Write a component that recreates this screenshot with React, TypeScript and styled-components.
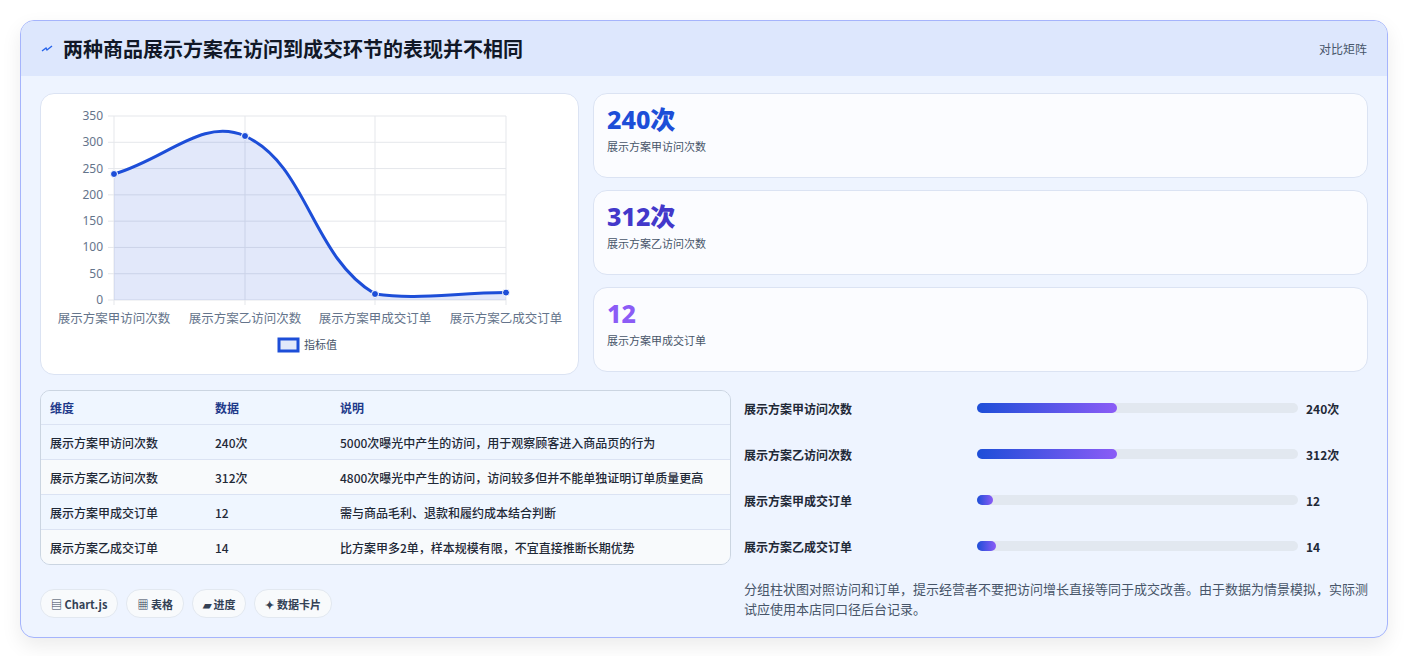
import React from "react";
import styled, { createGlobalStyle } from "styled-components";

const G = createGlobalStyle`
  body { margin: 0; background: #fff; font-family: "Noto Sans CJK SC", "Noto Sans", sans-serif; }
`;
const Page = styled.div`padding: 20px 20px 22px 20px;`;
const Card = styled.div`
  border: 1px solid #a5b4fc; border-radius: 14px; background: #eef4ff; overflow: hidden;
  box-shadow: 0 8px 20px rgba(0,0,0,0.08);
`;
const Header = styled.div`
  height: 55px; display: flex; align-items: center; justify-content: space-between;
  padding: 0 20px 0 20px; background: #dde7fd;
`;
const Title = styled.div`display: flex; align-items: center; gap: 10px; font-size: 20px; font-weight: 700; color: #111827;`;
const Tag = styled.div`font-size: 12px; color: #475569;`;
const Body = styled.div`padding: 17px 19px 18px 19px; display: flex; flex-direction: column; gap: 15px;`;
const TopRow = styled.div`display: grid; grid-template-columns: 539px 1fr; column-gap: 14px;`;
const BottomRow = styled.div`display: grid; grid-template-columns: 691px 1fr; column-gap: 13px;`;
const White = styled.div`background: #fff; border: 1px solid #dbe3f3; border-radius: 14px;`;
const ChartBox = styled(White)`height: 280px; position: relative;`;
const Stats = styled.div`display: flex; flex-direction: column; gap: 12px;`;
const Stat = styled(White)`height: 85px; background: #fbfcff; padding: 11px 13px; box-sizing: border-box;`;
const StatV = styled.div<{ c: string }>`font-size: 25px; font-weight: 800; color: ${p => p.c}; line-height: 28px; font-family: "Noto Sans", "Noto Sans CJK SC", sans-serif;`;
const StatL = styled.div`font-size: 11px; color: #475569; margin-top: 5px;`;
const Left = styled.div`display: flex; flex-direction: column; gap: 24px;`;
const Table = styled.div`border: 1px solid #cbd5e1; border-radius: 10px; overflow: hidden;`;
const Row = styled.div<{ bg: string; head?: boolean }>`
  display: grid; grid-template-columns: 165px 125px 1fr; height: ${p => p.head ? 33 : 34}px; align-items: center;
  padding-left: 9px; font-size: 12px; background: ${p => p.bg};
  color: ${p => p.head ? "#1e3a8a" : "#1f2937"}; font-weight: ${p => p.head ? 700 : 500};
  border-top: ${p => p.head ? "none" : "1px solid #dbe3f3"};
`;
const Chips = styled.div`display: flex; gap: 8px;`;
const Chip = styled.div`height: 27px; padding: 0 10px; border-radius: 14px; background: #f8fafc; border: 1px solid #e2e8f0;
  display: flex; align-items: center; gap: 4px; font-size: 11px; font-weight: 700; color: #334155;`;
const Right = styled.div`display: flex; flex-direction: column;`;
const Bars = styled.div`display: flex; flex-direction: column; gap: 28px; padding-top: 9px;`;
const BarRow = styled.div`display: grid; grid-template-columns: 225px 321px 1fr; align-items: center; column-gap: 8px; height: 18px;`;
const BarL = styled.div`font-size: 12px; font-weight: 600; color: #1f2937;`;
const Track = styled.div`height: 10px; border-radius: 5px; background: #e2e8f0;`;
const Fill = styled.div`height: 100%; border-radius: 5px; background: linear-gradient(90deg, #1d4ed8, #8b5cf6);`;
const BarV = styled.div`font-size: 12px; font-weight: 700; color: #1f2937;`;
const Note = styled.div`margin-top: 24px; font-size: 13px; line-height: 20px; color: #475569;`;

const rows = [
  ["展示方案甲访问次数", "240次", "5000次曝光中产生的访问，用于观察顾客进入商品页的行为"],
  ["展示方案乙访问次数", "312次", "4800次曝光中产生的访问，访问较多但并不能单独证明订单质量更高"],
  ["展示方案甲成交订单", "12", "需与商品毛利、退款和履约成本结合判断"],
  ["展示方案乙成交订单", "14", "比方案甲多2单，样本规模有限，不宜直接推断长期优势"],
];
const bars: [string, string, number][] = [
  ["展示方案甲访问次数", "240次", 43.5], ["展示方案乙访问次数", "312次", 43.5],
  ["展示方案甲成交订单", "12", 5], ["展示方案乙成交订单", "14", 6],
];

const Chart = () => {
  const ox = 40, oy = 93;
  const xs = [113, 244, 374, 505].map(x => x - ox);
  const y0 = 299 - oy, h = 184;
  const labels = ["展示方案甲访问次数", "展示方案乙访问次数", "展示方案甲成交订单", "展示方案乙成交订单"];
  const pts = [[113, 173], [244, 135], [374, 293], [505, 291.6]].map(([x, y]) => [x - ox, y - oy]);
  const t = (x: number, y: number) => `${x - ox},${y - oy}`;
  const d = `M${t(113,173)} C${t(165,158)} ${t(202,116)} ${t(244,135)} C${t(307,164)} ${t(310,255)} ${t(374,293)} C${t(415,299)} ${t(453,292)} ${t(505,291.6)}`;
  return (
    <svg width="538" height="280" style={{ display: "block" }}>
      {[0, 50, 100, 150, 200, 250, 300, 350].map(v => {
        const y = y0 - (v / 350) * h;
        return <g key={v}>
          <line x1={xs[0] - 6} x2={xs[3]} y1={y} y2={y} stroke="#e5e7eb" />
          <text x={xs[0] - 11} y={y + 4} fontSize="12" fill="#64748b" textAnchor="end" fontFamily="Noto Sans">{v}</text>
        </g>;
      })}
      {xs.map((x, i) => <g key={i}>
        <line x1={x} x2={x} y1={y0 - h} y2={y0 + 5} stroke="#e5e7eb" />
        <text x={x} y={y0 + 23} fontSize="12.5" fill="#64748b" textAnchor="middle" fontFamily="Noto Sans CJK SC">{labels[i]}</text>
      </g>)}
      <path d={`${d} L${xs[3]},${y0} L${xs[0]},${y0} Z`} fill="rgba(29,78,216,0.13)" />
      <path d={d} fill="none" stroke="#1d4ed8" strokeWidth="3" />
      {pts.map(([x, y], i) => <circle key={i} cx={x} cy={y} r="3.5" fill="#1d4ed8" stroke="#fff" strokeWidth="1" />)}
      <rect x={238} y={245} width={19} height={12} fill="rgba(29,78,216,0.13)" stroke="#1d4ed8" strokeWidth="3" />
      <text x={263} y={255} fontSize="11" fill="#475569" fontFamily="Noto Sans CJK SC">指标值</text>
    </svg>
  );
};

export default function App() {
  return (
    <Page>
      <G />
      <Card>
        <Header>
          <Title>
            <svg width="12" height="10" viewBox="0 0 12 10"><path d="M1 7 L5 4 L6 6 L11 2" stroke="#2563eb" strokeWidth="1.4" fill="none" /></svg>
            两种商品展示方案在访问到成交环节的表现并不相同
          </Title>
          <Tag>对比矩阵</Tag>
        </Header>
        <Body>
          <TopRow>
            <ChartBox><Chart /></ChartBox>
            <Stats>
              <Stat><StatV c="#1d4ed8">240次</StatV><StatL>展示方案甲访问次数</StatL></Stat>
              <Stat><StatV c="#4338ca">312次</StatV><StatL>展示方案乙访问次数</StatL></Stat>
              <Stat><StatV c="#8b5cf6">12</StatV><StatL>展示方案甲成交订单</StatL></Stat>
            </Stats>
          </TopRow>
          <BottomRow>
            <Left>
              <Table>
                <Row head bg="#eff6ff"><span>维度</span><span>数据</span><span>说明</span></Row>
                {rows.map((r, i) => <Row key={i} bg={i % 2 ? "#f8fafc" : "#eff6ff"}><span>{r[0]}</span><span>{r[1]}</span><span>{r[2]}</span></Row>)}
              </Table>
              <Chips>
                <Chip>▤ Chart.js</Chip><Chip>▦ 表格</Chip><Chip>▰ 进度</Chip><Chip>✦ 数据卡片</Chip>
              </Chips>
            </Left>
            <Right>
              <Bars>
                {bars.map(([l, v, p]) => <BarRow key={l}>
                  <BarL>{l}</BarL>
                  <Track><Fill style={{ width: `${p}%` }} /></Track>
                  <BarV>{v}</BarV>
                </BarRow>)}
              </Bars>
              <Note>分组柱状图对照访问和订单，提示经营者不要把访问增长直接等同于成交改善。由于数据为情景模拟，实际测试应使用本店同口径后台记录。</Note>
            </Right>
          </BottomRow>
        </Body>
      </Card>
    </Page>
  );
}
